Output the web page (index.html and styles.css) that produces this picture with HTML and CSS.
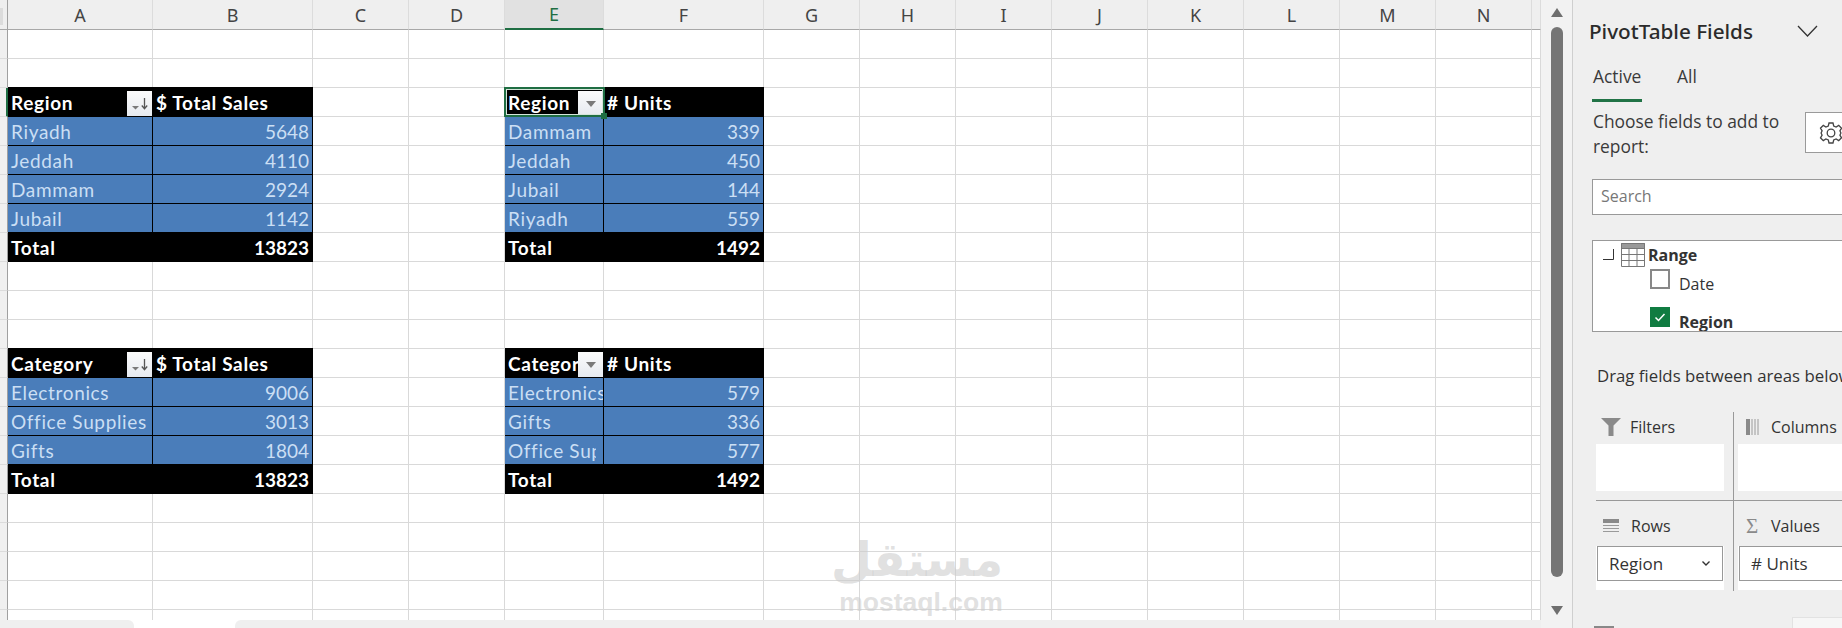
FILE: index.html
```html
<!DOCTYPE html>
<html lang="en">
<head>
<meta charset="utf-8">
<title>PivotTable Fields</title>
<link rel="stylesheet" href="styles.css">
</head>
<body>
<div class="app">
  <main class="sheet">
    <div class="grid-wrap">
      <table class="grid">
        <colgroup>
          <col class="c-rh"><col class="c-a"><col class="c-b"><col class="c-n"><col class="c-n"><col class="c-e"><col class="c-b"><col class="c-n"><col class="c-n"><col class="c-n"><col class="c-n"><col class="c-n"><col class="c-n"><col class="c-n"><col class="c-n"><col class="c-o">
        </colgroup>
        <thead>
          <tr><th class="corner"><span class="all"></span></th><th>A</th><th>B</th><th>C</th><th>D</th><th class="cur">E</th><th>F</th><th>G</th><th>H</th><th>I</th><th>J</th><th>K</th><th>L</th><th>M</th><th>N</th><th></th></tr>
        </thead>
        <tbody>
          <tr><td class="rh"></td><td></td><td></td><td></td><td></td><td></td><td></td><td></td><td></td><td></td><td></td><td></td><td></td><td></td><td></td><td></td></tr>
          <tr><td class="rh"></td><td></td><td></td><td></td><td></td><td></td><td></td><td></td><td></td><td></td><td></td><td></td><td></td><td></td><td></td><td></td></tr>
          <tr>
            <td class="rh on"></td>
            <td class="hd nr">Region<span class="fbtn"><svg width="18" height="14" viewBox="0 0 18 14"><path class="ic-t" d="M1 9h7l-3.5 3.5z"/><path class="ic-l" d="M13.5 1v10M10.8 8.5l2.7 3.2 2.7-3.2"/></svg></span></td>
            <td class="hd">$ Total Sales</td><td></td><td></td>
            <td class="hd nr selc">Region<span class="fbtn"><svg width="14" height="8" viewBox="0 0 14 8"><path class="ic-t" d="M2 1h10L7 7z"/></svg></span><span class="sel"></span><span class="handle"></span></td>
            <td class="hd"># Units</td><td></td><td></td><td></td><td></td><td></td><td></td><td></td><td></td><td></td>
          </tr>
          <tr><td class="rh"></td><td class="dt">Riyadh</td><td class="dt num">5648</td><td></td><td></td><td class="dt">Dammam</td><td class="dt num">339</td><td></td><td></td><td></td><td></td><td></td><td></td><td></td><td></td><td></td></tr>
          <tr><td class="rh"></td><td class="dt">Jeddah</td><td class="dt num">4110</td><td></td><td></td><td class="dt">Jeddah</td><td class="dt num">450</td><td></td><td></td><td></td><td></td><td></td><td></td><td></td><td></td><td></td></tr>
          <tr><td class="rh"></td><td class="dt">Dammam</td><td class="dt num">2924</td><td></td><td></td><td class="dt">Jubail</td><td class="dt num">144</td><td></td><td></td><td></td><td></td><td></td><td></td><td></td><td></td><td></td></tr>
          <tr><td class="rh"></td><td class="dt">Jubail</td><td class="dt num">1142</td><td></td><td></td><td class="dt">Riyadh</td><td class="dt num">559</td><td></td><td></td><td></td><td></td><td></td><td></td><td></td><td></td><td></td></tr>
          <tr><td class="rh"></td><td class="hd nr">Total</td><td class="hd num">13823</td><td></td><td></td><td class="hd nr">Total</td><td class="hd num">1492</td><td></td><td></td><td></td><td></td><td></td><td></td><td></td><td></td><td></td></tr>
          <tr><td class="rh"></td><td></td><td></td><td></td><td></td><td></td><td></td><td></td><td></td><td></td><td></td><td></td><td></td><td></td><td></td><td></td></tr>
          <tr><td class="rh"></td><td></td><td></td><td></td><td></td><td></td><td></td><td></td><td></td><td></td><td></td><td></td><td></td><td></td><td></td><td></td></tr>
          <tr><td class="rh"></td><td></td><td></td><td></td><td></td><td></td><td></td><td></td><td></td><td></td><td></td><td></td><td></td><td></td><td></td><td></td></tr>
          <tr>
            <td class="rh"></td>
            <td class="hd nr">Category<span class="fbtn"><svg width="18" height="14" viewBox="0 0 18 14"><path class="ic-t" d="M1 9h7l-3.5 3.5z"/><path class="ic-l" d="M13.5 1v10M10.8 8.5l2.7 3.2 2.7-3.2"/></svg></span></td>
            <td class="hd">$ Total Sales</td><td></td><td></td>
            <td class="hd nr">Category<span class="fbtn"><svg width="14" height="8" viewBox="0 0 14 8"><path class="ic-t" d="M2 1h10L7 7z"/></svg></span></td>
            <td class="hd"># Units</td><td></td><td></td><td></td><td></td><td></td><td></td><td></td><td></td><td></td>
          </tr>
          <tr><td class="rh"></td><td class="dt">Electronics</td><td class="dt num">9006</td><td></td><td></td><td class="dt">Electronics</td><td class="dt num">579</td><td></td><td></td><td></td><td></td><td></td><td></td><td></td><td></td><td></td></tr>
          <tr><td class="rh"></td><td class="dt">Office Supplies</td><td class="dt num">3013</td><td></td><td></td><td class="dt">Gifts</td><td class="dt num">336</td><td></td><td></td><td></td><td></td><td></td><td></td><td></td><td></td><td></td></tr>
          <tr><td class="rh"></td><td class="dt">Gifts</td><td class="dt num">1804</td><td></td><td></td><td class="dt"><span class="cut">Office Supplies</span></td><td class="dt num">577</td><td></td><td></td><td></td><td></td><td></td><td></td><td></td><td></td><td></td></tr>
          <tr><td class="rh"></td><td class="hd nr">Total</td><td class="hd num">13823</td><td></td><td></td><td class="hd nr">Total</td><td class="hd num">1492</td><td></td><td></td><td></td><td></td><td></td><td></td><td></td><td></td><td></td></tr>
          <tr><td class="rh"></td><td></td><td></td><td></td><td></td><td></td><td></td><td></td><td></td><td></td><td></td><td></td><td></td><td></td><td></td><td></td></tr>
          <tr><td class="rh"></td><td></td><td></td><td></td><td></td><td></td><td></td><td></td><td></td><td></td><td></td><td></td><td></td><td></td><td></td><td></td></tr>
          <tr><td class="rh"></td><td></td><td></td><td></td><td></td><td></td><td></td><td></td><td></td><td></td><td></td><td></td><td></td><td></td><td></td><td></td></tr>
          <tr><td class="rh"></td><td></td><td></td><td></td><td></td><td></td><td></td><td></td><td></td><td></td><td></td><td></td><td></td><td></td><td></td><td></td></tr>
          <tr><td class="rh"></td><td></td><td></td><td></td><td></td><td></td><td></td><td></td><td></td><td></td><td></td><td></td><td></td><td></td><td></td><td></td></tr>
        </tbody>
      </table>
      <div class="mark">
        <div class="mark-ar" lang="ar" dir="rtl">مستقل</div>
        <div class="mark-en">mostaql.com</div>
      </div>
    </div>
    <div class="tabs">
      <div class="tab-bar tab-left"></div>
      <div class="tab-active"></div>
      <div class="tab-bar tab-right"></div>
    </div>
  </main>

  <div class="gutter">
    <svg class="arrow" width="14" height="12" viewBox="0 0 14 12"><path d="M7 1l6 9H1z"/></svg>
    <div class="thumb"></div>
    <svg class="arrow" width="14" height="12" viewBox="0 0 14 12"><path d="M1 2h12l-6 9z"/></svg>
  </div>

  <aside class="panel">
    <div class="title-row">
      <h1 class="title">PivotTable Fields</h1>
      <svg class="chev" width="21" height="12" viewBox="0 0 21 12"><path d="M1 1l9.500 10L20 1"/></svg>
    </div>
    <div class="ptabs">
      <span class="ptab active">Active</span>
      <span class="ptab">All</span>
    </div>
    <div class="choose">
      <p class="choose-text">Choose fields to add to report:</p>
      <div class="gear-btn">
        <svg width="24" height="24" viewBox="0 0 24 24"><path d="M10 2h4l.7 3 2.400 1 2.600-1.600 2.800 2.800L20.900 9.800 21.900 12 20.900 14.200 22.500 16.800 19.700 19.600 17.100 18 14.700 19 14 22H10L9.300 19 6.900 18 4.300 19.600 1.500 16.800 3.100 14.200 2.100 12 3.100 9.800 1.500 7.200 4.300 4.400 6.900 6 9.300 5z"/><circle cx="12" cy="12" r="3.800"/></svg>
      </div>
    </div>
    <div class="search">Search</div>
    <div class="fields">
      <div class="f-range">
        <svg class="corner-ic" width="11" height="11" viewBox="0 0 11 11"><path d="M10.500 0v10.500H0"/></svg>
        <svg class="table-ic" width="24" height="24" viewBox="0 0 24 24"><path class="tb-top" d="M0 0h24v5H0z"/><path class="tb-line" d="M.5 .5h23v23H.5zM.5 5.500h23M.5 11.500h23M.5 17.500h23M8 5.500v18M16 5.500v18"/></svg>
        <b class="f-name">Range</b>
      </div>
      <div class="f-item f-date"><span class="cb"></span><span>Date</span></div>
      <div class="f-item f-region"><span class="cb on"><svg width="14" height="14" viewBox="0 0 14 14"><path d="M2.500 7.500l3 3 6-6.500"/></svg></span><b>Region</b></div>
    </div>
    <p class="drag">Drag fields between areas below:</p>
    <div class="areas">
      <section class="area a1">
        <div class="a-label"><svg class="a-ic" width="20" height="18" viewBox="0 0 20 18"><path d="M0 0h20l-7.500 7.500V18h-5V7.500z"/></svg><span class="a-text">Filters</span></div>
        <div class="a-box"></div>
      </section>
      <section class="area a2">
        <div class="a-label"><svg class="a-ic narrow" width="14" height="16" viewBox="0 0 14 16"><path d="M0 0h4v16H0z"/><path class="a-thin" d="M6 0v16M9 0v16M12 0v16"/></svg><span class="a-text">Columns</span></div>
        <div class="a-box"></div>
      </section>
      <section class="area a3">
        <div class="a-label low"><svg class="a-ic rows" width="16" height="14" viewBox="0 0 16 14"><path d="M0 0h16v4H0z"/><path class="a-thin" d="M0 6.500h16M0 9.500h16M0 12.500h16"/></svg><span class="a-text">Rows</span></div>
        <div class="a-box short"><div class="pill">Region<svg width="10" height="7" viewBox="0 0 10 7"><path d="M1.500 1.500L5 5l3.500-3.500"/></svg></div></div>
      </section>
      <section class="area a4">
        <div class="a-label low"><span class="sigma">Σ</span><span class="a-text">Values</span></div>
        <div class="a-box short"><div class="pill"># Units</div></div>
      </section>
    </div>
    <div class="bottom">
      <span class="b-ic"></span>
      <span class="b-btn"></span>
    </div>
  </aside>
</div>
</body>
</html>
```

FILE: styles.css
```css
* { box-sizing: border-box; }
html, body { margin: 0; padding: 0; height: 100%; overflow: hidden; background: #fff; }
.app { display: flex; width: 1842px; height: 628px; overflow: hidden; }

/* Sheet */
.sheet { width: 1541px; flex: none; display: flex; flex-direction: column; height: 628px; }
.grid-wrap { position: relative; height: 620px; overflow: hidden; flex: none; }
.grid { border-collapse: separate; border-spacing: 0; table-layout: fixed; width: 1541px; font-family: "Lato", "Liberation Sans", sans-serif; font-size: 19px; letter-spacing: .65px; }
.c-rh { width: 8px; }
.c-a { width: 145px; }
.c-b { width: 160px; }
.c-n { width: 96px; }
.c-e { width: 99px; }
.c-o { width: 9px; }
.grid th { height: 30px; padding: 0; background: #efefef; color: #444; font: 400 18px "Noto Sans", "Open Sans", sans-serif; letter-spacing: 0; border-right: 1px solid #dcdcdc; border-bottom: 1px solid #a8a8a8; }
.grid th.cur { background: #e1e1e1; color: #1f6e43; border-bottom: 2px solid #1f6e43; }
.grid th.corner { position: relative; border-right: 1px solid #a0a0a0; }
.all { position: absolute; left: 0; top: 8px; width: 3px; height: 17px; background: #dcdcdc; }
.grid td { height: 29px; padding: 1px 3px 0; border-right: 1px solid #d9d9d9; border-bottom: 1px solid #d9d9d9; white-space: nowrap; overflow: hidden; position: relative; line-height: 27px; }
.grid td.rh { padding: 0; background: #f0f0f0; border-right: 1px solid #a0a0a0; border-bottom-color: #dcdcdc; }
.grid td.rh.on { border-right: 2px solid #1f6e43; }
.grid td.hd { background: #000; color: #fff; font-weight: 700; border-color: #000; box-shadow: 0 -1px 0 #000; }
.grid td.hd.nr { border-right-color: #000; }
.grid td.dt { background: #4a7dba; color: #cbdff4; border-color: #000; }
.grid td.num { text-align: right; letter-spacing: 0; }
.cut { display: block; width: 88px; overflow: hidden; }
.fbtn { position: absolute; right: 0; top: 3px; width: 25px; height: 25px; background: linear-gradient(#fbfbfb, #e6eaf0); display: flex; align-items: center; justify-content: center; }
.ic-t { fill: #7a7a7a; }
.ic-l { fill: none; stroke: #555; stroke-width: 1.300; }
.grid td.selc { overflow: visible; z-index: 2; }
.sel { position: absolute; left: -1px; top: -1px; right: -2px; bottom: -1px; border: 2px solid #1f6e43; box-shadow: inset 0 0 0 1px #d5e4da; pointer-events: none; }
.handle { position: absolute; right: -4px; bottom: -3px; width: 6px; height: 6px; background: #1f6e43; }

/* Watermark over the grid */
.mark { position: absolute; left: 839px; top: 532px; width: 164px; color: rgba(205,205,205,.62); text-align: center; font-weight: 700; }
.mark-ar { font: 700 47px/56px "DejaVu Sans", sans-serif; height: 56px; white-space: nowrap; }
.mark-en { font: 700 26.5px/28px "Liberation Sans", sans-serif; white-space: nowrap; }

/* Tabs strip */
.tabs { display: flex; height: 8px; background: #fff; flex: none; }
.tab-bar { background: #efefef; }
.tab-left { width: 134px; border-top-right-radius: 6px; }
.tab-active { width: 101px; }
.tab-right { flex: 1; border-top-left-radius: 6px; }

/* Scrollbar gutter */
.gutter { width: 32px; flex: none; background: #f2f2f2; border-right: 1px solid #cfcfcf; display: flex; flex-direction: column; align-items: center; padding: 7px 0 12px; }
.arrow { fill: #6f6f6f; flex: none; }
.thumb { width: 12px; flex: 1; margin: 8px 0 27px; background: #757575; border-radius: 6px; }

/* Panel */
.panel { flex: 1; min-width: 0; background: #efefef; overflow: hidden; font: 400 16px/25px "Open Sans", "Noto Sans", sans-serif; color: #333; padding: 16px 0 0 19px; }
.title-row { display: flex; align-items: center; width: 229px; margin-left: -3px; height: 30px; justify-content: space-between; }
.title { margin: 0; font: 500 20.7px/30px "Noto Sans", "Open Sans", sans-serif; color: #2b2b2b; white-space: nowrap; }
.chev { fill: none; stroke: #333; stroke-width: 1.300; flex: none; }
.ptabs { display: flex; gap: 34px; margin-top: 15px; height: 41px; font-size: 17.4px; }
.ptab { padding: 0 1px; line-height: 30px; height: 41px; color: #3a3a3a; }
.ptab.active { border-bottom: 3px solid #217346; width: 50px; }
.choose { display: flex; width: 400px; margin-top: 7px; height: 50px; }
.choose-text { margin: 0 0 0 1px; width: 212px; flex: none; line-height: 25px; color: #3a3a3a; font-size: 17.4px; }
.gear-btn { width: 60px; height: 41px; margin-top: 3px; background: #fff; border: 1px solid #9a9a9a; display: flex; align-items: center; padding-left: 13px; }
.gear-btn svg { fill: none; stroke: #444; stroke-width: 1.300; }
.search { width: 400px; height: 36px; margin-top: 20px; background: #fff; border: 1px solid #999; padding-left: 8px; line-height: 33px; color: #777; }
.fields { width: 400px; height: 92px; margin-top: 25px; background: #fff; border: 1px solid #999; overflow: hidden; color: #333; position: relative; }
.f-range { display: flex; align-items: center; height: 28px; padding: 1px 0 0 10px; }
.corner-ic { fill: none; stroke: #333; stroke-width: 1; margin-top: -3px; }
.table-ic { margin-left: 7px; margin-top: -2px; }
.tb-top { fill: #999; }
.tb-line { fill: none; stroke: #777; stroke-width: 1; }
.f-name { margin-left: 3px; font-weight: 700; }
.f-item { display: flex; gap: 9px; padding-left: 57px; }
.cb { width: 20px; height: 20px; border: 2px solid #888; background: #fff; flex: none; display: flex; align-items: center; justify-content: center; }
.cb.on { background: #107c41; border-color: #107c41; }
.cb svg { fill: none; stroke: #fff; stroke-width: 1.500; }
.f-date { height: 38px; align-items: flex-start; }
.f-date span:last-child { margin-top: 3px; }
.f-region { align-items: flex-start; }
.f-region b { margin-top: 3px; font-weight: 700; }
.drag { margin: 31px 0 0 5px; white-space: nowrap; line-height: 25px; color: #333; font-size: 16.8px; }
.areas { display: grid; grid-template-columns: 138px 300px; grid-template-rows: 89px 90px; margin: 24px 0 0 4px; width: 438px; }
.area { display: flex; flex-direction: column; }
.a1, .a3 { border-right: 1px solid #999; }
.a1, .a2 { border-bottom: 1px solid #999; }
.a2, .a4 { padding-left: 4px; }
.a-label { display: flex; align-items: center; height: 32px; color: #333; padding: 0 0 2px 5px; }
.a-label.low { height: 45px; padding: 5px 0 0 5px; }
.a-ic { fill: #8a8a8a; flex: none; width: 20px; margin-right: 9px; }
.a-ic.narrow { width: 14px; margin: 0 11px 0 3px; }
.a-ic.rows { width: 16px; margin: 0 12px 0 2px; }
.a-thin { fill: none; stroke: #9a9a9a; stroke-width: 1; }
.sigma { width: 14px; margin: 0 11px 0 3px; color: #8a8a8a; font: 400 21px/1 "Liberation Serif", serif; }
.a-text { white-space: nowrap; }
.a-box { width: 128px; height: 47px; background: #fff; }
.a2 .a-box, .a4 .a-box { width: 260px; }
.a-box.short { height: 44px; }
.pill { display: flex; align-items: center; justify-content: space-between; height: 35px; margin: 0 1px 0 1px; padding: 0 11px; background: #fff; border: 1px solid #999; color: #333; font-size: 17px; }
.pill svg { fill: none; stroke: #333; stroke-width: 1.400; }
.bottom { display: flex; width: 400px; margin-top: 26px; padding-left: 2px; height: 40px; position: relative; }
.b-ic { width: 20px; height: 2px; margin-top: 9px; background: #888; }
.b-btn { width: 120px; height: 30px; margin-left: 178px; background: #f6f6f6; border: 1px solid #e2e2e2; }
```
